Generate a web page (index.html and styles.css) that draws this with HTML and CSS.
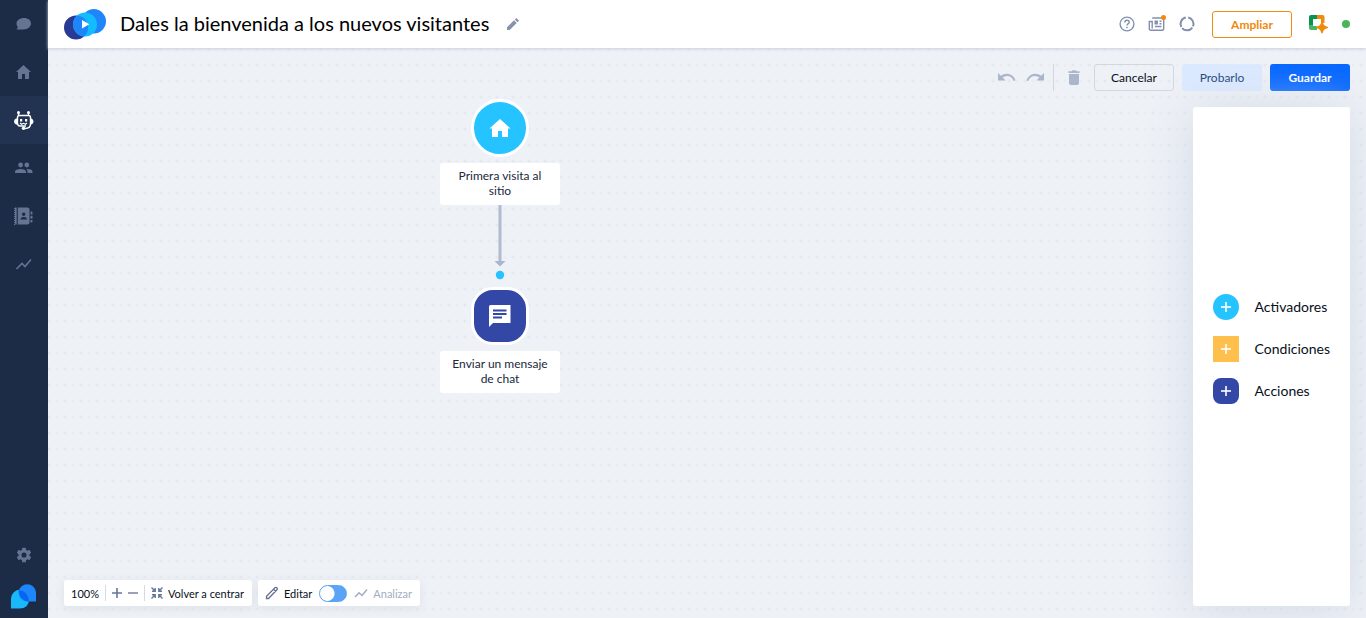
FILE: index.html
```html
<!DOCTYPE html>
<html lang="es">
<head>
<meta charset="utf-8">
<title>Dales la bienvenida a los nuevos visitantes</title>
<link rel="stylesheet" href="styles.css">
</head>
<body>
<div class="app">
  <nav class="sidebar" aria-label="Principal">
    <a class="nav-item" href="#chat" aria-label="Chat"><svg width="24" height="24" viewBox="0 0 24 24"><path fill="currentColor" d="M12 6c-4.200 0-7.500 2.400-7.500 5.500 0 1.700.8 3 1.500 3.500l-1.500 2.500h7c4.200 0 7.500-2.800 7.500-6S16.200 6 12 6z"/></svg></a>
    <a class="nav-item" href="#inicio" aria-label="Inicio"><svg width="24" height="24" viewBox="0 0 24 24"><path fill="currentColor" d="M11.500 5l-7.500 7h2v7h4v-5h3v5h4v-7h2z"/></svg></a>
    <a class="nav-item nav-item-active" href="#bots" aria-label="Chatbots"><svg width="24" height="24" viewBox="0 0 24 24" fill="none" stroke="currentColor" stroke-width="1.400"><path d="M5.500 11V9.500q0-2 2-2h9q2 0 2 2V16q0 4.500-5.500 4.500h-1.500M6.500 5v2.500M16.500 5v2.500M5.500 11v5q.5 2 2.500 2h6"/><g fill="currentColor" stroke="none"><circle cx="6.500" cy="4.500" r="1.500"/><circle cx="16.500" cy="4.500" r="1.500"/><rect x="8" y="11" width="2.200" height="2.500"/><rect x="13" y="11" width="2.200" height="2.500"/><path d="M5.800 10.500H4Q2 11.500 2 13.500t2 3h1.800zM18.200 10.500H19.500q2 1 2 3t-2 3h-1.300z"/><circle cx="11.500" cy="20.300" r="1.700"/></g><path stroke-width="1.200" d="M8 15l1.500 1.300 2-1 2 1L15 15"/></svg></a>
    <a class="nav-item" href="#visitantes" aria-label="Visitantes"><svg width="24" height="24" viewBox="0 0 24 24" fill="currentColor"><circle cx="8.600" cy="9" r="2.400"/><circle cx="14.800" cy="9" r="2.400"/><path d="M3 17v-1.500Q3.500 13 8.500 13t5.500 2.500V17zM15.500 17v-1.500q0-1.300-1-2.400 5.500-.1 6 2.400V17z"/></svg></a>
    <a class="nav-item" href="#contactos" aria-label="Contactos"><svg width="24" height="24" viewBox="0 0 24 24"><path fill="currentColor" fill-rule="evenodd" d="M3 3.500h1.700v17H3zM5.800 3.500H15.500q2 0 2 2v13q0 2-2 2H5.800zM11.700 8.500a1.700 1.700 0 1 0 .01 0zM8.500 15.500h6.500Q15 13 11.750 13T8.500 15.500zM18.500 7.500h1q1 0 1 1v2h-2zM18.500 11.700h2v3h-2zM18.500 16h2v1.500q0 1-1 1h-1z"/><path stroke="currentColor" stroke-width="1" stroke-dasharray="1 1" d="M2.500 4v17"/></svg></a>
    <a class="nav-item" href="#analitica" aria-label="Analítica"><svg width="24" height="24" viewBox="0 0 24 24" fill="none" stroke="currentColor" stroke-width="1.600"><path d="M4.500 17l5.500-5.500 3 3 6-7"/></svg></a>
    <div class="nav-space"></div>
    <a class="nav-item nav-settings" href="#ajustes" aria-label="Ajustes"><svg width="16" height="16" viewBox="1 1 22 22"><path fill="currentColor" d="M19.430 12.980c.04-.32.070-.64.070-.98s-.03-.66-.07-.98l2.110-1.650c.19-.15.240-.42.120-.64l-2-3.460c-.12-.22-.39-.3-.61-.22l-2.490 1c-.52-.4-1.080-.73-1.690-.98l-.38-2.650C14.460 2.180 14.250 2 14 2h-4c-.25 0-.46.180-.49.420l-.38 2.650c-.61.250-1.170.59-1.690.98l-2.490-1c-.23-.09-.49 0-.61.220l-2 3.460c-.13.220-.07.490.12.640l2.110 1.650c-.04.320-.07.650-.07.980s.03.660.070.980l-2.110 1.650c-.19.150-.24.420-.12.640l2 3.460c.12.220.39.300.61.220l2.490-1c.52.400 1.080.730 1.690.980l.38 2.650c.03.240.24.420.49.420h4c.25 0 .46-.18.490-.42l.38-2.650c.61-.25 1.170-.59 1.690-.98l2.490 1c.23.090.49 0 .61-.22l2-3.460c.12-.22.070-.49-.12-.64zM12 15.500a3.500 3.500 0 1 1 0-7 3.500 3.500 0 0 1 0 7z"/></svg></a>
    <a class="nav-logo" href="#tidio" aria-label="Tidio"><svg width="26" height="26" viewBox="0 0 26 26"><path fill="#18b8fb" d="M0 25.500V15.500A9 9 0 0 1 18 16q0 9.500-9.500 9.500z"/><path fill="#1c86fa" d="M7.500 9A8.800 8.800 0 0 1 25 9v9.500h-9Q8 18 7.500 9z"/><path fill="#0566f2" d="M7.500 7.300Q17 7.500 18 18.500 8.500 18 7.500 7.300z"/></svg></a>
  </nav>
  <div class="workspace">
    <header class="topbar">
      <svg class="brand" width="42" height="31" viewBox="0 0 42 31"><circle cx="12" cy="18.500" r="12" fill="#283a93"/><circle cx="29.800" cy="12.300" r="12.200" fill="#1e86f9"/><circle cx="21" cy="15.500" r="12" fill="#13bbff"/><path fill="#1e86f9" d="M13 6.550A12 12 0 0 1 20 27.450 12 12 0 0 1 13 6.550z"/><path fill="#fff" d="M18 11v8.600l7.200-4.300z"/></svg>
      <h1 class="title">Dales la bienvenida a los nuevos visitantes</h1>
      <button class="icon-button edit-title" aria-label="Editar título"><svg width="14" height="14" viewBox="0 0 14 14" fill="#8892ad"><path d="M1 10.300V13h2.700l7-7L8 3.300zM8.800 2.500l2.700 2.700L13 3.700 10.300 1z"/></svg></button>
      <div class="top-actions">
        <button class="icon-button" aria-label="Ayuda"><svg width="18" height="18" viewBox="0 0 18 18" fill="none" stroke="#8290ad" stroke-width="1.400"><circle cx="9" cy="9" r="6.900"/><path d="M6.800 7.400q0-2.200 2.200-2.200t2.200 2q0 1-1.200 1.700-1 .7-1 1.700M9 11.700v1.500"/></svg></button>
        <button class="icon-button" aria-label="Novedades"><svg width="18" height="18" viewBox="0 0 18 18" fill="none" stroke="#8290ad" stroke-width="1.400"><path d="M4.200 3h11.500v10.500q0 1.800-1.800 1.800H3q-1.700 0-1.700-1.800V6.500h2.900v7M7 11.500h6.500M11.500 6.300h2M11.500 8.700h2"/><path fill="#8290ad" d="M7.200 6.300h2v2.500h-2z"/><circle cx="15.500" cy="2.500" r="2.500" fill="#ef8a0c" stroke="none"/></svg></button>
        <button class="icon-button" aria-label="Uso"><svg width="18" height="18" viewBox="0 0 18 18" fill="none" stroke="#8290ad" stroke-width="2"><path d="M10.200 2.600a6.500 6.500 0 0 1 4.800 8.800M14.300 12.600a6.500 6.500 0 0 1-10.200.5M3.300 12.100a6.500 6.500 0 0 1 4.500-9.500"/></svg></button>
        <button class="button upgrade">Ampliar</button>
        <button class="icon-button avatar" aria-label="Cuenta"><svg width="20" height="20" viewBox="0 0 20 20"><path fill="#0b9150" d="M3 1h6v4H5v6H1V3q0-2 2-2z"/><path fill="#45b862" d="M1 11h4v1h4v4H3q-2 0-2-2z"/><path fill="#ef8a0c" d="M9 1h5.500q2 0 2 2v6H13V5H9z"/><path fill="#ef8a0c" d="M14 8.500q.8 4.200 5.200 5-4.400.8-5.200 5-.8-4.200-5.200-5 4.400-.8 5.200-5z" stroke="#ef8a0c" stroke-width="1.600" stroke-linejoin="round"/></svg></button>
        <span class="online" role="img" aria-label="En línea"></span>
      </div>
    </header>
    <main class="board">
      <div class="flow">
        <section class="node trigger">
          <div class="node-icon"><svg width="24" height="24" viewBox="0 0 24 24"><path fill="#fff" d="M12 3L1.500 12.500H4V21h6v-6h4v6h6v-8.500h2.500z"/></svg></div>
          <p class="node-label">Primera visita al sitio</p>
        </section>
        <svg class="arrow" width="12" height="82" viewBox="0 0 12 82"><path d="M6 0v58" stroke="#b0bbd0" stroke-width="3"/><path fill="#aab6cc" d="M.5 56h11l-5.500 5.500z"/><circle cx="6" cy="70" r="4.200" fill="#25c3ff"/></svg>
        <section class="node action">
          <div class="node-icon"><svg width="24" height="24" viewBox="0 0 24 24"><path fill="#fff" d="M2.500 1h20v18H5l-4 4V2.500Q1 1 2.500 1z"/><path stroke="#3247a6" stroke-width="2" d="M5 6.500h13.500M5 10h13.500M5 13.500h9"/></svg></div>
          <p class="node-label">Enviar un mensaje de chat</p>
        </section>
      </div>
      <div class="side">
        <div class="toolbar">
          <button class="icon-button" aria-label="Deshacer"><svg width="18" height="10" viewBox="0 0 18 10"><path fill="#abb6cb" d="M0 0l2.800 2.800Q5.300.8 9 .8q6 0 8.500 6.700l-1.800.6Q13.800 3 9 3 6.500 3 4.600 4.600L7.500 7.500H0z"/></svg></button>
          <button class="icon-button" aria-label="Rehacer"><svg width="18" height="10" viewBox="0 0 18 10"><path fill="#abb6cb" transform="matrix(-1 0 0 1 18 0)" d="M0 0l2.800 2.800Q5.300.8 9 .8q6 0 8.500 6.700l-1.800.6Q13.800 3 9 3 6.500 3 4.600 4.600L7.500 7.500H0z"/></svg></button>
          <span class="tool-rule"></span>
          <button class="icon-button trash" aria-label="Eliminar"><svg width="12" height="16" viewBox="0 0 12 16"><path fill="#abb6cb" d="M1 4h10v9q0 2-2 2H3q-2 0-2-2zM.5 1.200h3L4.500.3h3l1 .9h3V3H.5z"/></svg></button>
          <button class="button cancel">Cancelar</button>
          <button class="button test">Probarlo</button>
          <button class="button save">Guardar</button>
        </div>
        <aside class="palette">
          <button class="palette-item"><span class="chip chip-trigger"></span>Activadores</button>
          <button class="palette-item"><span class="chip chip-condition"></span>Condiciones</button>
          <button class="palette-item"><span class="chip chip-action"></span>Acciones</button>
        </aside>
      </div>
      <div class="view-controls">
        <div class="control-card zoom-card">
          <span class="zoom-level">100%</span>
          <span class="rule"></span>
          <button class="icon-button" aria-label="Acercar"><svg width="10" height="10" viewBox="0 0 10 10"><path d="M5 0v10M0 5h10" stroke="#66779a" stroke-width="1.600"/></svg></button>
          <button class="icon-button" aria-label="Alejar"><svg width="10" height="10" viewBox="0 0 10 10"><path d="M0 5h10" stroke="#9aa3b5" stroke-width="2"/></svg></button>
          <span class="rule"></span>
          <button class="recenter"><svg width="12" height="12" viewBox="0 0 12 12" fill="none" stroke="#66779a" stroke-width="1.400"><path d="M.5.5l4 4M4.200 1v3.200H1M11.500.5l-4 4M7.800 1v3.200H11M.5 11.500l4-4M4.200 11V7.800H1M11.500 11.500l-4-4M7.800 11V7.800H11"/></svg>Volver a centrar</button>
        </div>
        <div class="control-card mode-card">
          <label class="mode" for="mode"><svg width="14" height="14" viewBox="0 0 14 14" fill="none" stroke="#66708f" stroke-width="1.300"><path d="M1.500 12.500v-2.300l8.700-8.700q1-.5 1.800.5t0 1.800l-8.500 8.700zM8.500 3.200L10.800 5.500"/></svg>Editar</label>
          <input class="switch" id="mode" type="checkbox" role="switch">
          <label class="mode mode-off" for="mode"><svg width="14" height="14" viewBox="0 0 14 14" fill="none" stroke="#a3adbf" stroke-width="1.500"><path d="M1 11l4-4.300 3 2.800 5-6"/></svg>Analizar</label>
        </div>
      </div>
    </main>
  </div>
</div>
</body>
</html>
```
FILE: styles.css
```css
* { box-sizing: border-box; }
body { margin: 0; font-family: Lato, "Open Sans", sans-serif; font-size: 12px; color: #080f1a; }
button { font: inherit; color: inherit; background: none; border: 0; padding: 0; cursor: pointer; }
svg { display: block; flex: none; }

.app { display: flex; min-height: 100vh; }
.sidebar { width: 48px; flex: none; display: flex; flex-direction: column; background: #1c2b46; color: #647491; }
.nav-item { height: 48px; display: flex; align-items: center; justify-content: center; color: inherit; }
.nav-item-active { background: #213351; color: #fff; }
.nav-space { flex: 1; }
.nav-settings { height: 40px; }
.nav-logo { display: flex; justify-content: center; padding: 8px 0 9px; }

.workspace { flex: 1; min-width: 0; display: flex; flex-direction: column; }
.topbar { height: 48px; display: flex; align-items: center; padding: 0 16px; background: #fff; box-shadow: 0 1px 3px #c8d0de; z-index: 1; }
.brand { margin-right: 14px; }
.title { margin: 0; padding-bottom: 3px; font-size: 20px; line-height: 24px; font-weight: 400; color: #000; white-space: nowrap; }
.edit-title { margin-left: 17px; }
.icon-button { display: flex; align-items: center; justify-content: center; }
.top-actions { margin-left: auto; display: flex; align-items: center; gap: 12px; }
.upgrade { margin-left: 4px; border: 1px solid #ef8a0c; color: #ef8a0c; font-weight: 700; }
.avatar { margin-left: 4px; margin-right: 2px; }
.online { width: 8px; height: 8px; border-radius: 50%; background: #4ab557; }

.button { width: 80px; height: 27px; border-radius: 3px; font-size: 12px; }
.cancel { border: 1px solid #d3d8e0; }
.test { background: #dbe9ff; color: #1c4378; }
.save { background: #0566ff; color: #fff; font-weight: 700; }

.board { flex: 1; display: grid; grid-template-columns: 1fr auto; grid-template-rows: 1fr auto; background-color: #eef1f6; background-image: radial-gradient(circle, #e4e8ef 1px, transparent 2px), radial-gradient(circle, #e9edf3 1px, transparent 2px); background-size: 16px 16px; background-position: 9px 9px, 1px 9px; }
.flow { grid-area: 1 / 1; justify-self: center; display: flex; flex-direction: column; align-items: center; padding-top: 51px; }
.node { width: 120px; display: flex; flex-direction: column; align-items: center; gap: 6px; }
.node-icon { width: 58px; height: 58px; display: flex; align-items: center; justify-content: center; border: 3px solid #fff; }
.trigger .node-icon { border-radius: 50%; background: #25c3ff; }
.action .node-icon { border-radius: 22px; background: #3247a6; }
.node-label { margin: 0; width: 100%; padding: 5px 10px 7px; border-radius: 3px; background: #fff; text-align: center; text-wrap: wrap; font-size: 12px; line-height: 15px; color: #20283c; }
.trigger .node-label { padding-left: 16px; padding-right: 16px; }

.side { grid-area: 1 / 2 / 3 / 3; display: flex; flex-direction: column; align-items: flex-end; padding: 16px 16px 12px 45px; gap: 16px; }
.toolbar { display: flex; align-items: center; gap: 8px; }
.toolbar .icon-button { padding: 0 1px; }
.toolbar .trash { padding: 0 6px; }
.tool-rule { width: 1px; height: 27px; background: #d1d7e1; }
.palette { flex: 1; display: flex; flex-direction: column; justify-content: center; gap: 16px; padding: 0 20px 16px; background: #fff; border-radius: 3px; box-shadow: 0 3px 48px #d3dae6; }
.palette-item { display: flex; align-items: center; gap: 16px; font-size: 14px; line-height: 26px; white-space: nowrap; }
.chip { width: 26px; height: 26px; background: linear-gradient(#ffffffcc, #ffffffcc) center / 10px 2px no-repeat, linear-gradient(#ffffffcc, #ffffffcc) center / 2px 10px no-repeat; }
.chip-trigger { background-color: #25c3ff; border-radius: 50%; }
.chip-condition { background-color: #ffbf4d; }
.chip-action { background-color: #3247a6; border-radius: 8px; }

.view-controls { grid-area: 2 / 1; display: flex; gap: 6px; padding: 0 16px 12px; }
.control-card { display: flex; align-items: center; height: 26px; padding: 0 8px 0 7px; background: #fff; border-radius: 3px; box-shadow: 0 2px 8px #dce1e9; font-size: 11px; white-space: nowrap; }
.zoom-card { gap: 6px; }
.rule { width: 1px; height: 16px; background: #d4dbe5; }
.recenter, .mode { display: flex; align-items: center; gap: 5px; }
.mode-card { gap: 7px; }
.mode-off { color: #a3adbf; }
.switch { appearance: none; margin: 0; width: 28px; height: 17px; border-radius: 9px; border: 1px solid #5ba4f5; background: radial-gradient(circle at 7px 50%, #fff 7px, #5ba4f5 8px); cursor: pointer; }
```
